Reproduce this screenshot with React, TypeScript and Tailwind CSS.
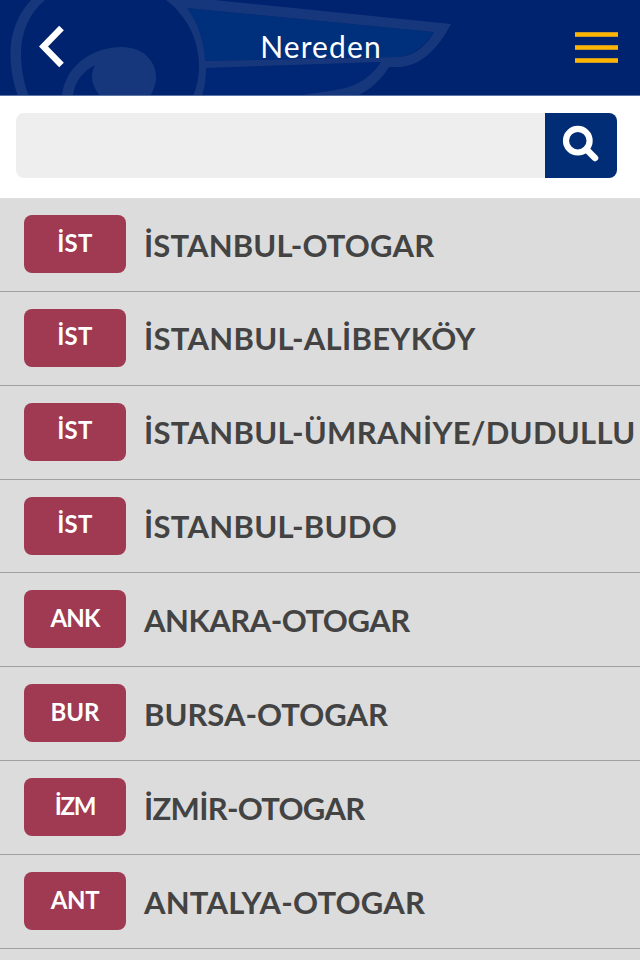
type Stop = {
  code: string;
  name: string;
  codeClass: string;
  nameClass: string;
};

const stops: Stop[] = [
  { code: "İST", name: "İSTANBUL-OTOGAR", codeClass: "tracking-[0.3px]", nameClass: "tracking-[0.15px]" },
  { code: "İST", name: "İSTANBUL-ALİBEYKÖY", codeClass: "tracking-[0.3px]", nameClass: "tracking-[0.3px]" },
  { code: "İST", name: "İSTANBUL-ÜMRANİYE/DUDULLU", codeClass: "tracking-[0.3px]", nameClass: "tracking-[0.3px]" },
  { code: "İST", name: "İSTANBUL-BUDO", codeClass: "tracking-[0.3px]", nameClass: "tracking-[0.3px]" },
  { code: "ANK", name: "ANKARA-OTOGAR", codeClass: "tracking-[-0.8px]", nameClass: "tracking-[-0.5px]" },
  { code: "BUR", name: "BURSA-OTOGAR", codeClass: "tracking-[0px]", nameClass: "tracking-[0px]" },
  { code: "İZM", name: "İZMİR-OTOGAR", codeClass: "tracking-[-1.3px]", nameClass: "tracking-[-0.7px]" },
  { code: "ANT", name: "ANTALYA-OTOGAR", codeClass: "tracking-[-0.4px]", nameClass: "tracking-[0.2px]" }
];

function WingLogo() {
  return (
    <svg className="absolute inset-0" width="640" height="95" viewBox="0 0 640 95" fill="none">
      <path d="M187 8L434 32Q419 54 400 57L205 61Q203 33 187 8Z" fill="#002f7b" />
      <path d="M206 68L381 62Q367 83 345 89L300 96H202Q206 83 206 68Z" fill="#002776" />
      <g fill="#17377c">
        <path d="M31 0H45C29 13 21 33 21 53C21 69 24 84 29 96H18C13 83 10.5 69 10.5 53C10.5 32 18 14 31 0Z" />
        <path d="M166 0H214L451 24C439 47 421 67 398 67H389C381 80 371 89 357 96H296L336 90C357 87 371 77 381 62L206 68C206 78 205 87 202 96H193C197 87 199 77 199 66C199 40 187 16 166 0ZM187 8C198 23 204 42 205 61L400 57C415 55 427 45 434 32Z" />
        <path d="M62 96C65 66 92 47 122 47C143 47 156 61 156 77C156 84 154 90 150 96H100C91 85 90 75 95 65C82 72 74 83 73 96Z" />
      </g>
    </svg>
  );
}

function Header() {
  return (
    <header className="relative flex h-24 items-center justify-between border-b border-[#5c75a6] bg-[#00236f] pr-[22px] pl-[39px]">
      <WingLogo />
      <button aria-label="Geri" className="relative" type="button">
        <svg width="26" height="44" viewBox="0 0 26 44" fill="none">
          <path d="M22.500 2L4.500 20.500L22.500 39" stroke="#fff" strokeWidth="6.500" />
        </svg>
      </button>
      <h1 className="absolute inset-x-0 top-[28px] pl-[2px] text-center text-[30px] leading-9 tracking-[1.1px] text-white">
        Nereden
      </h1>
      <button aria-label="Menü" className="relative flex flex-col gap-[8px]" type="button">
        <span className="h-[5px] w-[43px] border-y border-[#c8972a] bg-[#ffb500]" />
        <span className="h-[5px] w-[43px] border-y border-[#c8972a] bg-[#ffb500]" />
        <span className="h-[5px] w-[43px] border-y border-[#c8972a] bg-[#ffb500]" />
      </button>
    </header>
  );
}

function SearchBar() {
  return (
    <div className="flex h-[102px] bg-white pt-[17px] pr-[23px] pl-4">
      <input
        aria-label="Ara"
        className="h-[65px] min-w-0 flex-1 rounded-l-lg bg-[#eeeeee] px-4 text-2xl outline-none"
        type="text"
      />
      <button
        aria-label="Bul"
        className="flex h-[65px] w-[72px] rounded-r-lg bg-[#002d76] pt-[12px] pl-[17px]"
        type="button"
      >
        <svg width="38" height="38" viewBox="0 0 38 38" fill="none" stroke="#fff">
          <circle cx="15.800" cy="15.700" r="11.800" strokeWidth="6.200" />
          <path d="M25 25L33 33" strokeWidth="6.500" strokeLinecap="round" />
        </svg>
      </button>
    </div>
  );
}

function StopRow({ stop }: { stop: Stop }) {
  return (
    <li className="flex h-[93.860px] border-b border-[#a0a0a0] pt-[17px] pl-6">
      <span
        className={[
          "h-[58px] w-[102px] shrink-0 rounded-lg bg-[#a03952] pt-[9.500px] text-center text-[24px] leading-9 font-bold text-white",
          stop.codeClass
        ].join(" ")}
      >
        {stop.code}
      </span>
      <span
        className={[
          "mt-[9.500px] ml-[18px] text-[31px] leading-10 font-bold whitespace-nowrap text-[#434343]",
          stop.nameClass
        ].join(" ")}
      >
        {stop.name}
      </span>
    </li>
  );
}

export default function App() {
  return (
    <main className="h-[960px] w-[640px] overflow-hidden bg-[#dcdcdc] font-[Lato,sans-serif]">
      <Header />
      <SearchBar />
      <ul>
        {stops.map((stop) => (
          <StopRow key={stop.name} stop={stop} />
        ))}
      </ul>
    </main>
  );
}
